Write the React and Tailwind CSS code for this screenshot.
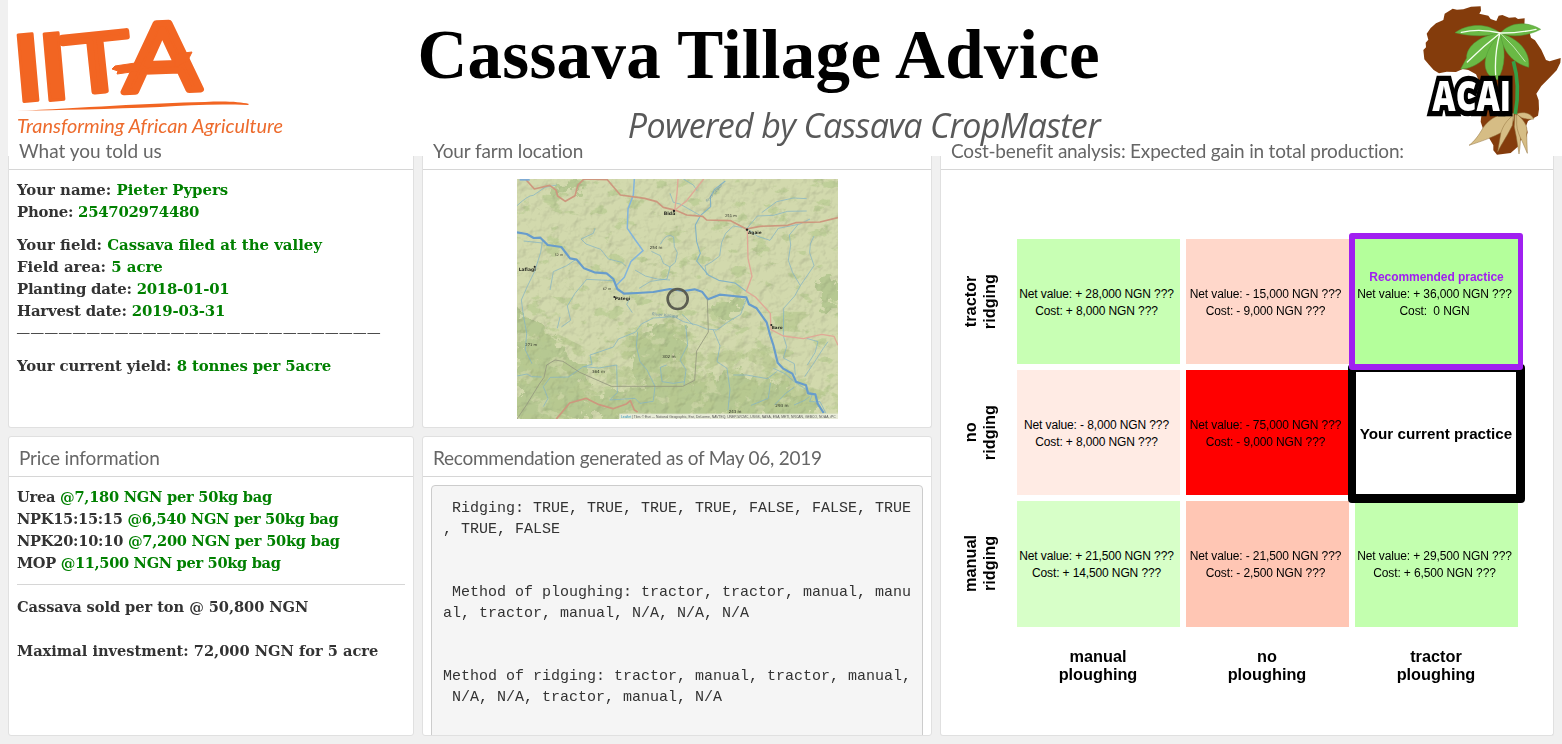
import React from "react";

const serif = "font-['DejaVu_Serif',serif]";

function IitaLogo() {
  return (
    <svg className="block h-[144px] w-[290px] shrink-0" viewBox="8 0 290 144" aria-label="IITA">
      <g fill="#f26522" stroke="#f26522" strokeLinejoin="round" fontFamily="Liberation Sans">
        <text fontWeight="700" fontSize="97" strokeWidth="3" transform="translate(17.5 102) rotate(-5)">I</text>
        <text fontWeight="700" fontSize="97" strokeWidth="3" transform="translate(43.5 101) rotate(-5)">I</text>
        <text fontSize="84" strokeWidth="6" vectorEffect="non-scaling-stroke" transform="translate(66 95) rotate(-6) scale(1.34 1)">T</text>
        <text fontSize="98" strokeWidth="7" vectorEffect="non-scaling-stroke" transform="translate(124 92) skewY(-2) scale(1.17 1)">A</text>
        <path strokeWidth="1" d="M112 69 L115 66 L142 62 L138 71 L117 74 L118 71Z M175 55 L184 53 L192 52 L189 58 L188 61 L175 67Z" />
        <path stroke="none" d="M16 111 C80 108 150 103 205 102 C227 101 240 102 249 104 L248 105 C215 104 190 105 160 107 C110 109 60 110 16 111Z" />
      </g>
      <text x="17" y="133" fill="#ed6b2d" fontFamily="Lato, sans-serif" fontStyle="italic" fontWeight="400" fontSize="20" textLength="266" lengthAdjust="spacingAndGlyphs">Transforming African Agriculture</text>
    </svg>
  );
}

function AcaiLogo() {
  return (
    <svg className="block h-[152px] w-[144px] shrink-0" viewBox="54 9 432 456" aria-label="ACAI">
      <path fill="#843c0c" d="M70 150 L78 142 L77 128 L85 119 L80 101 L92 84 L108 70 L130 60 L134 41 L158 26 L171 29 L190 28 L213 20 L242 19 L243 32 L238 41 L265 47 L272 57 L289 63 L296 47 L307 45 L327 53 L346 52 L354 57 L374 55 L373 80 L388 95 L393 113 L405 121 L424 149 L438 180 L449 184 L482 174 L481 188 L470 211 L447 235 L424 258 L409 281 L416 301 L417 328 L414 347 L384 363 L378 379 L383 397 L379 412 L357 424 L355 439 L332 459 L291 464 L280 451 L280 436 L265 410 L249 386 L242 365 L245 340 L238 300 L240 250 L228 223 L205 210 L188 207 L168 216 L140 215 L117 220 L101 210 L87 194 L73 178Z" />
      <g fill="#d6bd85" stroke="#93733f" strokeWidth="1.5">
        <path d="M341 340 C300 338 270 355 250 382 C235 408 223 424 207 436 C241 425 300 406 326 382 C340 370 345 354 341 340Z" />
        <path d="M340 346 C320 360 309 379 303 397 L293 455 C306 430 326 400 337 376Z" />
        <path d="M345 342 L343 380 L349 410 L357 462 C364 422 363 375 357 350Z" />
        <path d="M350 342 C371 360 385 377 380 402 L382 460 L367 425 C358 408 351 391 350 373Z" />
        <path d="M350 341 C373 334 391 339 402 357 C385 359 363 357 350 341Z" />
      </g>
      <path d="M340 184 Q361 255 346 342" fill="none" stroke="#35a046" strokeWidth="11" />
      <g fill="#6ab945" stroke="#4f9b36" strokeWidth="1.5">
        <path d="M301 99 C260 68 206 70 165 98 C207 109 262 111 301 99Z" />
        <path d="M301 99 C329 68 377 61 422 88 C377 111 330 112 301 99Z" />
        <path d="M301 99 C246 105 199 135 200 174 L182 207 C235 206 279 160 301 99Z" />
        <path d="M301 99 C255 149 242 201 270 228 L292 240 C319 198 316 145 301 99Z" />
        <path d="M301 99 C308 150 330 185 386 202 C392 150 350 115 301 99Z" />
      </g>
      <g fill="none" stroke="#f4ffed" strokeWidth="4" strokeLinecap="round">
        <path d="M301 99 Q239 84 184 97 M301 99 Q351 100 408 88 M301 99 Q250 138 202 186 M300 99 Q283 160 287 224" />
        <path strokeWidth="2" d="M301 99 Q345 141 375 184" />
      </g>
      <text x="97" y="332" fontFamily="Open Sans, sans-serif" fontWeight="800" fontSize="126" textLength="236" lengthAdjust="spacingAndGlyphs" fill="#fff" stroke="#000" strokeWidth="32" paintOrder="stroke">ACAI</text>
    </svg>
  );
}

function Place({ x, y, children, size = 14, weight = 700, fill = "#2e3028" }) {
  return <text x={x} y={y} fontSize={size} fontWeight={weight} fill={fill}>{children}</text>;
}

function FarmMap() {
  return (
    <svg className="block h-[240px] w-[321px]" viewBox="51 42 963 720" fontFamily="DejaVu Sans, sans-serif">
      <defs>
        <filter id="patches" x="0" y="0" width="1" height="1" colorInterpolationFilters="sRGB">
          <feTurbulence type="fractalNoise" baseFrequency="0.014 0.018" numOctaves="6" seed="8" />
          <feColorMatrix values="0 0 0 0 0.72  0 0 0 0 0.79  0 0 0 0 0.565  12 0 0 0 -5.9" />
          <feComposite in2="SourceGraphic" operator="in" />
        </filter>
        <filter id="clearings" x="0" y="0" width="1" height="1" colorInterpolationFilters="sRGB">
          <feTurbulence type="fractalNoise" baseFrequency="0.02 0.026" numOctaves="6" seed="33" />
          <feColorMatrix values="0 0 0 0 0.80  0 0 0 0 0.835  0 0 0 0 0.65  12 0 0 0 -7.3" />
          <feComposite in2="SourceGraphic" operator="in" />
        </filter>
        <filter id="sparse" x="0" y="0" width="1" height="1" colorInterpolationFilters="sRGB">
          <feTurbulence type="fractalNoise" baseFrequency="0.016 0.026" numOctaves="5" seed="21" />
          <feColorMatrix values="0 0 0 0 0.75  0 0 0 0 0.81  0 0 0 0 0.60  12 0 0 0 -7.3" />
          <feComposite in2="SourceGraphic" operator="in" />
        </filter>
        <filter id="ragged" x="-0.1" y="-0.1" width="1.2" height="1.2">
          <feTurbulence type="fractalNoise" baseFrequency="0.03" numOctaves="5" seed="3" />
          <feDisplacementMap in="SourceGraphic" scale="90" xChannelSelector="R" yChannelSelector="G" />
        </filter>
        <filter id="relief" x="0" y="0" width="1" height="1" colorInterpolationFilters="sRGB">
          <feTurbulence type="fractalNoise" baseFrequency="0.03" numOctaves="4" seed="5" />
          <feDiffuseLighting surfaceScale="9" lightingColor="#fff" diffuseConstant="1.2" result="lit"><feDistantLight azimuth="225" elevation="55" /></feDiffuseLighting>
          <feComposite in="lit" in2="SourceGraphic" operator="in" />
        </filter>
      </defs>
      <rect x="51" y="42" width="963" height="720" fill="#d2d9ad" />
      <rect x="51" y="42" width="963" height="720" filter="url(#sparse)" />
      <path filter="url(#ragged)" fill="#b6c892" d="M51 440 L90 455 L130 500 L170 530 L210 570 L260 590 L250 650 L280 762 H51Z M390 535 L480 470 L550 490 L540 570 L570 640 L460 700 L400 620Z M590 640 L700 620 L800 650 L920 690 L970 762 H260 L300 680 L500 670Z M950 350 L1014 340 V430 L960 430Z M640 410 L740 405 L700 460 L640 455Z M150 55 L240 60 L230 90 L170 90Z" />
      <path filter="url(#patches)" d="M51 440 L160 500 L280 560 L380 500 L480 450 L620 470 L740 520 L850 600 L1014 690 V762 H51Z M780 440 H930 V500 H780Z" opacity=".7" />
      <path filter="url(#clearings)" d="M51 470 L280 560 L480 450 L740 520 L1014 690 V762 H51Z" opacity=".75" />
      <rect x="51" y="42" width="963" height="720" filter="url(#relief)" opacity=".16" className="mix-blend-multiply" />

      <g fill="none" stroke="#84b3c4" strokeWidth="2.2" strokeLinejoin="round">
        <path d="M51 122 Q85 90 100 91 L135 67 L170 60 M285 190 L280 205 L243 222 L258 237 L302 253 L325 282 L365 292 L378 304" />
        <path d="M128 225 L122 262 L104 319 L81 366 L64 405 L70 450 L80 505 L76 555 L96 596 M71 228 L128 234" />
        <path d="M225 285 L200 302 L160 320 L150 375 M340 347 L260 343 L225 385 L202 423 L212 466 L184 486 M180 456 L172 490 M390 399 L380 418 L397 443" />
        <path d="M454 259 L481 272 L490 295 L510 306 L501 342 L452 349 L417 370 M481 238 Q500 200 521 216 L523 245 L532 263 L526 292 L508 307" />
        <path d="M405 315 L436 333 L472 342 L510 345 M510 85 L520 112 L540 117 L600 151 M550 42 L580 60 L591 77" />
        <path d="M676 48 L644 73 L631 96 L632 125 L602 151 L586 180 L590 230 L601 265 L590 288 L626 331 L656 346 L705 354 L739 379" strokeWidth="3.4" />
        <path d="M741 190 L700 183 L677 205 L665 232 L659 273 L635 291 L615 302 L620 330 M741 190 L772 153 L820 151 L863 139 L920 138 M785 143 L830 110 L880 99 L920 101 M741 190 L773 214 L810 226 L835 190 L900 177 L930 162" />
        <path d="M893 180 L868 210 L872 240 L865 286 L878 323 L901 362 L942 302 L929 263 L931 237 L942 213 M901 362 L884 393 L851 430 L850 512 L860 545 L850 579 L883 596 L886 630" />
        <path d="M740 400 L722 448 L685 470 L651 495 L620 492 L591 480 L550 470 L523 455 L460 459 L424 477 L407 501 L355 522 L340 546 L300 560 L270 570 L276 598 L248 606 L205 636 L151 637 L130 665 L144 700 L130 725" />
        <path d="M413 500 L409 544 L420 590 L441 615 L465 664 L460 707 M557 481 L563 540 L540 585 L558 614 L552 660 M640 495 L660 542 L651 590 L681 610 L690 674 L684 735 M546 448 L580 480 M500 600 L481 607 L486 650 L520 655 L554 650" />
        <path d="M51 633 L81 627 L95 635 L125 636 M251 605 L296 609 L350 600 L352 683 L329 705 L405 700 L420 715 L460 709 M700 630 L740 630 L802 641 L830 620 M811 654 L805 700 L753 721 M920 520 L954 530 L945 563 L922 600 M984 530 L970 550 L941 595 L914 635 M882 667 L856 686 L824 720 M882 720 L914 706 L928 695" />
        <path d="M820 610 L855 626 L880 648 L910 668 L937 687 L929 710 L960 710 L978 745" />
      </g>
      <path d="M403 42 L400 90 L384 132 L382 190 L406 225 L429 257 L393 289 L373 337 L350 360" fill="none" stroke="#82b4dc" strokeWidth="4.5" />
      <path d="M51 202 L80 207 L101 219 L121 218 L143 240 L184 246 L210 280 L230 284 L252 310 L283 322 L320 325 L340 342 L352 372 L372 386 L412 384 L460 381 L510 372 L550 378 L584 373 L606 380 L624 403 L659 389 L700 393 L739 397 L747 418 L770 430 L800 472 L811 513 L820 540 L833 593 L850 611 L877 626 L888 650 L918 661 L924 685 L946 688 L953 716 L971 744" fill="none" stroke="#679ccc" strokeWidth="6.5" strokeLinejoin="round" />
      <path d="M51 762 L80 719 L118 657 L132 637 L140 600 L165 585 L189 589 L239 622 L334 664 H548 L584 646 L590 558 L625 501 L622 402" fill="none" stroke="#959980" strokeWidth="2.6" />
      <g fill="none" stroke="#cd977e" strokeLinejoin="round">
        <path strokeWidth="5" d="M76 42 L103 72 L149 61 L168 75 L173 93 L196 109 L225 92 L234 60 L252 42 L322 44 L361 90 L434 100 L470 110 L490 127 L531 137 L560 150 L608 154 L620 165 L692 167 L739 192 L780 184 L863 181 L887 173 L960 171 L1014 158" />
        <path strokeWidth="5" d="M169 762 L209 714 L258 700 L297 719 L339 731 L379 717 L391 707 L403 735 L413 741" />
        <path stroke="#e0a896" strokeWidth="4" d="M534 42 L531 85 L524 136 L560 107 L611 42 M742 193 L744 280 L756 334 L739 379 L766 396 L811 445 L813 494 L850 513 L910 521 L965 508 L1002 514 L1014 541" />
      </g>
      <g>
        <Place x={56} y={319} size={13.5}>Lafiagi</Place><Place x={344} y={405} size={13}>Pategi</Place>
        <Place x={491} y={149} size={14}>Bida</Place><Place x={744} y={206} size={13}>Agaie</Place><Place x={815} y={491} size={12.5}>Baro</Place>
        <Place x={164} y={273} size={10} weight={400}>52 m</Place><Place x={308} y={375} size={10} weight={400}>67 m</Place><Place x={449} y={251} size={12} weight={400}>254 m</Place>
        <Place x={675} y={155} size={11} weight={400}>251 m</Place><Place x={76} y={542} size={11} weight={400}>271 m</Place><Place x={276} y={623} size={12} weight={400}>364 m</Place>
        <Place x={487} y={580} size={12.5} weight={400}>302 m</Place><Place x={686} y={743} size={12} weight={400}>243 m</Place><Place x={826} y={726} size={12.5} weight={400}>293 m</Place>
        <text x="455" y="451" fontSize="12.5" fill="#7193a0" fontStyle="italic" transform="rotate(5 455 451)">River Kampe</text>
        <text x="622" y="112" fontSize="11" fill="#7193a0" fontStyle="italic" transform="rotate(-48 622 112)">River Gbako</text>
      </g>
      <g fill="#222"><circle cx="522" cy="138" r="3.5" /><circle cx="741" cy="194" r="3.5" /><circle cx="104" cy="305" r="3" /><circle cx="343" cy="396" r="3" /><circle cx="814" cy="480" r="3" /></g>
      <circle cx="533" cy="402" r="30" fill="#999" fillOpacity=".12" stroke="#5b5d51" strokeWidth="8" />
      <path d="M59 42 H89 V47 H59Z" fill="#7fabd4" />
      <rect x="358" y="746" width="656" height="16" fill="#edf0e2" opacity=".85" />
      <text x="363" y="758" fontFamily="Liberation Sans" fontSize="11" fill="#555" textLength="644" lengthAdjust="spacingAndGlyphs"><tspan fill="#2993bd">Leaflet</tspan> | Tiles © Esri — National Geographic, Esri, DeLorme, NAVTEQ, UNEP-WCMC, USGS, NASA, ESA, METI, NRCAN, GEBCO, NOAA, iPC</text>
    </svg>
  );
}

const titleText = "whitespace-nowrap font-[Lato,sans-serif] text-[19px] leading-7 text-[#666] [font-variant-ligatures:none]";

function Panel({ title, titleClass = "", open = false, className = "", children }) {
  return (
    <section className={`flex min-h-0 flex-col border border-[#e0e0e0] bg-white ${open ? "rounded-b-[3px] border-t-0" : "overflow-hidden rounded-[3px]"} ${className}`}>
      <div className={`flex shrink-0 items-end border-b border-[#d6d6d6] pb-1 pl-2.5 ${open ? "h-[14px]" : "h-10"}`}>
        <h2 className={`${titleText} ${titleClass}`}>{title}</h2>
      </div>
      {children}
    </section>
  );
}

function Line({ label, value, className = "" }) {
  return <div className={`h-[22px] whitespace-nowrap ${className}`}>{label} <span className="text-[#008000]">{value}</span></div>;
}

function Cell({ color, net, cost, recommended }) {
  return (
    <div className={`relative flex items-center justify-center pt-[2px] pr-[4px] ${color}`}>
      <div className="whitespace-nowrap text-center text-[12px] leading-[17px] tracking-[-0.12px]">
        {recommended && <div className="-mt-[17px] pl-1 text-[12px] font-bold tracking-[-0.05px] text-[#a020f0]">Recommended practice</div>}
        <div>Net value: {net} NGN ???</div>
        <div className="whitespace-pre">{cost}</div>
      </div>
      {recommended && <div className="absolute -top-[6px] -right-[5px] -bottom-[6px] -left-[6px] z-20 rounded-[3px] border-[6px] border-r-[5px] border-[#a020f0]" />}
    </div>
  );
}

function RowLabel({ children }) {
  return (
    <div className="flex items-center justify-start">
      <div className="rotate-180 text-center text-[16.3px] font-bold leading-[19px] [writing-mode:vertical-rl]">{children}<br />ridging</div>
    </div>
  );
}

function ColLabel({ children }) {
  return <div className="pt-[14px] pr-px text-center text-[16.3px] font-bold leading-[18px]">{children}<br />ploughing</div>;
}

function Matrix() {
  return (
    <div className="mt-[69px] ml-[20px] grid grid-cols-[50px_163px_163px_163px] grid-rows-[125px_125px_126px_60px] gap-x-[6px] gap-y-[6px] font-['Liberation_Sans',sans-serif] text-black">
      <RowLabel>tractor</RowLabel>
      <Cell color="bg-[#c8ffb4]" net="+ 28,000" cost="Cost: + 8,000 NGN ???" />
      <Cell color="bg-[#ffd7ca]" net="- 15,000" cost="Cost: - 9,000 NGN ???" />
      <Cell color="bg-[#b4ff9b]" net="+ 36,000" cost="Cost:  0 NGN" recommended />
      <RowLabel>no</RowLabel>
      <Cell color="bg-[#ffebe4]" net="- 8,000" cost="Cost: + 8,000 NGN ???" />
      <Cell color="bg-[#ff0000]" net="- 75,000" cost="Cost: - 9,000 NGN ???" />
      <div className="relative flex items-center justify-center">
        <span className="whitespace-nowrap pt-1 pr-px text-[15.2px] font-bold">Your current practice</span>
        <div className="absolute -top-[6px] -right-[7px] -bottom-[8px] -left-[7px] z-10 rounded-[4px] border-[9px] border-t-[8px] border-l-[8px] border-black" />
      </div>
      <RowLabel>manual</RowLabel>
      <Cell color="bg-[#d7ffc8]" net="+ 21,500" cost="Cost: + 14,500 NGN ???" />
      <Cell color="bg-[#ffc6b4]" net="- 21,500" cost="Cost: - 2,500 NGN ???" />
      <Cell color="bg-[#c3ffaf]" net="+ 29,500" cost="Cost: + 6,500 NGN ???" />
      <div />
      <ColLabel>manual</ColLabel>
      <ColLabel>no</ColLabel>
      <ColLabel>tractor</ColLabel>
    </div>
  );
}

const recommendation = ` Ridging: TRUE, TRUE, TRUE, TRUE, FALSE, FALSE, TRUE
, TRUE, FALSE


 Method of ploughing: tractor, tractor, manual, manu
al, tractor, manual, N/A, N/A, N/A


Method of ridging: tractor, manual, tractor, manual,
 N/A, N/A, tractor, manual, N/A`;

const info = `px-2 font-bold leading-[22px] text-[#333] ${serif}`;

export default function App() {
  return (
    <div className="flex h-[744px] w-[1562px] flex-col overflow-hidden bg-[#f0f0f0] pl-2">
      <header className="flex h-[156px] shrink-0 bg-white">
        <IitaLogo />
        <div className="flex w-[802px] shrink-0 flex-col items-end">
          <h1 className="mt-[15px] whitespace-nowrap font-['Liberation_Serif',serif] text-[69px] font-bold leading-[80px] tracking-[0.3px] text-black">Cassava Tillage Advice</h1>
          <p className="mt-[7px] whitespace-nowrap font-['Open_Sans',sans-serif] text-[34px] italic leading-[46px] tracking-[-0.62px] text-[#595959]">Powered by Cassava CropMaster</p>
        </div>
        <div className="ml-auto pt-[3px]"><AcaiLogo /></div>
      </header>
      <main className="flex min-h-0 flex-1 gap-2 pb-2">
        <div className="flex w-[406px] flex-col gap-2">
          <Panel open title="What you told us" className="h-[272px]">
            <div className={`pt-[9px] text-[14.9px] ${info}`}>
              <Line label="Your name:" value="Pieter Pypers" />
              <Line label="Phone:" value="254702974480" className="tracking-[-0.27px]" />
              <div className="h-[11px]" />
              <Line label="Your field:" value="Cassava filed at the valley" />
              <Line label="Field area:" value="5 acre" />
              <Line label="Planting date:" value="2018-01-01" className="tracking-[-0.25px]" />
              <Line label="Harvest date:" value="2019-03-31" className="tracking-[-0.18px]" />
              <div className="h-[22px] whitespace-nowrap font-['Liberation_Serif',serif] text-[12.5px] font-bold leading-[20px] tracking-[1.52px]">——————————————————————————</div>
              <div className="h-[11px]" />
              <Line label="Your current yield:" value="8 tonnes per 5acre" className="tracking-[-0.1px]" />
            </div>
          </Panel>
          <Panel title="Price information" titleClass="tracking-[-0.15px]" className="h-[300px]">
            <div className={`pt-[9px] text-[14.6px] ${info}`}>
              <Line label="Urea" value="@7,180 NGN per 50kg bag" className="tracking-[-0.24px]" />
              <Line label="NPK15:15:15" value="@6,540 NGN per 50kg bag" className="tracking-[-0.28px]" />
              <Line label="NPK20:10:10" value="@7,200 NGN per 50kg bag" className="tracking-[-0.24px]" />
              <Line label="MOP" value="@11,500 NGN per 50kg bag" className="tracking-[-0.32px]" />
              <hr className="mt-[10px] border-[#d6d6d6]" />
              <div className="mt-[11px] tracking-[-0.05px]">Cassava sold per ton @ 50,800 NGN</div>
              <div className="mt-[22px]">Maximal investment: 72,000 NGN for 5 acre</div>
            </div>
          </Panel>
        </div>
        <div className="flex w-[510px] flex-col gap-2">
          <Panel open title="Your farm location" titleClass="tracking-[-0.12px]" className="h-[272px]">
            <div className="flex justify-center pt-[9px]"><FarmMap /></div>
          </Panel>
          <Panel title="Recommendation generated as of May 06, 2019" titleClass="tracking-[-0.25px]" className="h-[300px]">
            <pre className="mx-2 mt-2 h-[270px] shrink-0 rounded-[4px] border border-[#ccc] bg-[#f5f5f5] px-[11px] pt-[12px] font-['Liberation_Mono',monospace] text-[15px] leading-[21px] text-[#333]">{recommendation}</pre>
          </Panel>
        </div>
        <Panel open title="Cost-benefit analysis: Expected gain in total production:" titleClass="tracking-[-0.2px]" className="h-[580px] w-[614px]">
          <Matrix />
        </Panel>
      </main>
    </div>
  );
}
